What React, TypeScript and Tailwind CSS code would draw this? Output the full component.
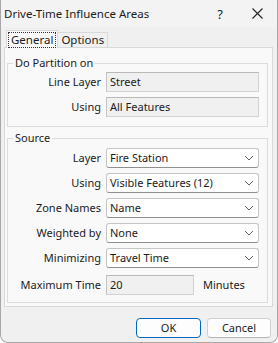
import React from "react";

const font = { fontFamily: '"Noto Sans", "Segoe UI", sans-serif' };

function Chevron() {
  return (
    <svg width="10" height="6" viewBox="0 0 10 6" className="shrink-0">
      <path d="M1 1 L5 5 L9 1" fill="none" stroke="#5f5f5f" strokeWidth="1" />
    </svg>
  );
}

function ReadRow({ label, value }: { label: string; value: string }) {
  return (
    <div className="flex items-center h-[20px]">
      <div className="w-[94px] text-right pr-[1px]">{label}</div>
      <div className="ml-[4px] w-[153px] h-[20px] bg-[#f0f0f0] border border-[#d2d2d2] border-t-[#b9b9b9] border-l-[#c4c4c4] flex items-center pl-[3px]">
        {value}
      </div>
    </div>
  );
}

function SelectRow({ label, value }: { label: string; value: string }) {
  return (
    <div className="flex items-center h-[20px]">
      <div className="w-[94px] text-right pr-[1px]">{label}</div>
      <div className="ml-[4px] w-[153px] h-[20px] bg-white border border-[#c5c5c5] border-b-[#8f8f8f] rounded-[3px] flex items-center justify-between pl-[3px] pr-[4px]">
        <span>{value}</span>
        <Chevron />
      </div>
    </div>
  );
}

export default function App() {
  return (
    <div
      className="w-[278px] h-[343px] bg-[#f0f0f0] flex flex-col border-x border-b border-[#a8a8a8] rounded-b-[8px] overflow-hidden text-[11px] leading-[16px] text-[#1b1b1b]"
      style={font}
    >
      {/* Title bar */}
      <div className="h-[27px] flex items-center pl-[3px] bg-[#f3f3f3] shrink-0">
        <div className="flex-1 text-[11.5px]">Drive-Time Influence Areas</div>
        <div className="w-[20px] text-center mr-[17px] text-[13px]">?</div>
        <div className="w-[20px] flex justify-center mr-[10px]">
          <svg width="11" height="11" viewBox="0 0 11 11">
            <path d="M0.5 0.5 L10.5 10.5 M10.5 0.5 L0.5 10.5" stroke="#222" strokeWidth="1.1" />
          </svg>
        </div>
      </div>

      {/* Tabs */}
      <div className="h-[20px] flex items-end pl-[5px] shrink-0">
        <div className="relative z-10 h-[18px] -mb-[1px] px-[1px] bg-[#f9f9f9] border border-b-0 border-[#d9d9d9] flex items-center">
          <span className="border border-dotted border-[#333] px-[2px] leading-[14px] text-[11.5px]">General</span>
        </div>
        <div className="h-[15px] px-[3px] bg-[#f0f0f0] border border-b-0 border-l-0 border-[#d9d9d9] flex items-center text-[11.5px]">
          Options
        </div>
      </div>

      {/* Panel */}
      <div className="ml-[3px] w-[269px] h-[260px] bg-[#f9f9f9] border border-[#d9d9d9] shrink-0 flex flex-col pl-[2px]">
        <fieldset className="mt-[7px] w-[261px] border border-[#dcdcdc] pb-[9px]">
          <legend className="ml-[5px] px-[2px] leading-[16px]">Do Partition on</legend>
          <div className="flex flex-col gap-[5px] pt-[1px]">
            <ReadRow label="Line Layer" value="Street" />
            <ReadRow label="Using" value="All Features" />
          </div>
        </fieldset>

        <fieldset className="mt-[3px] w-[261px] border border-[#dcdcdc] pb-[7px]">
          <legend className="ml-[5px] px-[2px] leading-[16px]">Source</legend>
          <div className="flex flex-col gap-[5px] pt-[2px]">
            <SelectRow label="Layer" value="Fire Station" />
            <SelectRow label="Using" value="Visible Features (12)" />
            <SelectRow label="Zone Names" value="Name" />
            <SelectRow label="Weighted by" value="None" />
            <SelectRow label="Minimizing" value="Travel Time" />
            <div className="flex items-center h-[20px] mt-[2px]">
              <div className="w-[94px] text-right pr-[1px]">Maximum Time</div>
              <div className="ml-[4px] w-[88px] h-[20px] bg-[#f0f0f0] border border-[#d2d2d2] border-t-[#b9b9b9] border-l-[#c4c4c4] flex items-center pl-[3px]">
                20
              </div>
              <div className="ml-[9px]">Minutes</div>
            </div>
          </div>
        </fieldset>
      </div>

      {/* Buttons */}
      <div className="flex justify-end gap-[6px] pr-[6px] mt-[11px]">
        <div className="w-[65px] h-[20px] bg-[#fdfdfd] border border-[#0067c0] rounded-[4px] flex items-center justify-center">
          OK
        </div>
        <div className="w-[64px] h-[20px] bg-[#fdfdfd] border border-[#d0d0d0] border-b-[#b5b5b5] rounded-[4px] flex items-center justify-center">
          Cancel
        </div>
      </div>
    </div>
  );
}
